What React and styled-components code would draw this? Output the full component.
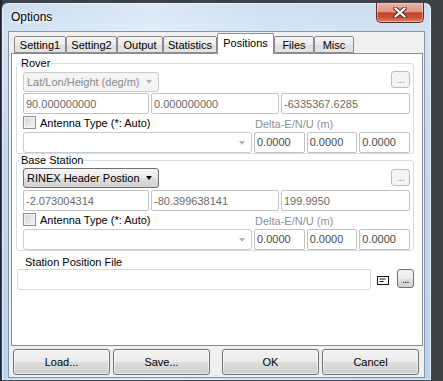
import React from 'react';
import styled, { createGlobalStyle } from 'styled-components';

const GlobalStyle = createGlobalStyle`
  * { box-sizing: border-box; }
  html, body {
    margin: 0;
    padding: 0;
    background: #30353c;
  }
  body {
    font-family: "Liberation Sans", Arial, sans-serif;
    font-size: 11px;
    color: #000;
  }
`;

const tabs = ['Setting1', 'Setting2', 'Output', 'Statistics', 'Positions', 'Files', 'Misc'];
const tabWidths = [52, 51, 46, 54, 57, 40, 40];

const CloseIcon = () => (
    <svg width="14" height="11" viewBox="0 0 14 11">
        <path d="M2.5 1.5 L11.5 9.5 M11.5 1.5 L2.5 9.5" stroke="#4a2a24" strokeWidth="4.2" strokeLinecap="round" fill="none" />
        <path d="M2.5 1.5 L11.5 9.5 M11.5 1.5 L2.5 9.5" stroke="#fff" strokeWidth="2.3" strokeLinecap="round" fill="none" />
    </svg>
);

const NoteIcon = () => (
    <svg width="12" height="9" viewBox="0 0 12 9">
        <rect x="0.5" y="0.5" width="11" height="8" fill="#fff" stroke="#111" />
        <path d="M2.5 3 H8.5 M2.5 5.5 H6.5" stroke="#111" strokeWidth="1" />
    </svg>
);

const PositionGroup = ({ title, mode, enabled, values }) => (
    <Group>
        <Legend>{title}</Legend>
        <TopRow>
            <Combo $width={136} $offset={enabled ? 0 : 1} $enabled={enabled} $disabled={!enabled}>
                <span>{mode}</span>
                <Arrow $dark={enabled} />
            </Combo>
            <DotsButton $offset={enabled ? 1 : 0}>...</DotsButton>
        </TopRow>
        <CoordRow>
            {values.map((v) => (
                <Field key={v} readOnly value={v} />
            ))}
        </CoordRow>
        <AntennaGrid>
            <CheckLabel>
                <CheckBox />
                Antenna Type (*: Auto)
            </CheckLabel>
            <DeltaLabel>Delta-E/N/U (m)</DeltaLabel>
        </AntennaGrid>
        <AntennaGrid>
            <Combo $offset={1}>
                <span />
                <Arrow />
            </Combo>
            <Field readOnly value="0.0000" $dark />
            <Field readOnly value="0.0000" $dark />
            <Field readOnly value="0.0000" $dark />
        </AntennaGrid>
    </Group>
);

const App = () => {
    return (
        <Screen>
            <GlobalStyle />
            <Window>
                <TitleBar>
                    <Title>Options</Title>
                    <CloseButton>
                        <CloseIcon />
                    </CloseButton>
                </TitleBar>
                <Client>
                    <TabStrip>
                        {tabs.map((t, i) => (
                            <Tab key={t} $width={tabWidths[i]} $active={t === 'Positions'}>
                                {t}
                            </Tab>
                        ))}
                    </TabStrip>
                    <Panel>
                        <PositionGroup
                            title="Rover"
                            mode="Lat/Lon/Height (deg/m)"
                            values={['90.000000000', '0.000000000', '-6335367.6285']}
                        />
                        <PositionGroup
                            title="Base Station"
                            mode="RINEX Header Postion"
                            enabled
                            values={['-2.073004314', '-80.399638141', '199.9950']}
                        />
                        <FileLabel>Station Position File</FileLabel>
                        <FileRow>
                            <Field readOnly value="" $light />
                            <IconSlot>
                                <NoteIcon />
                            </IconSlot>
                            <DotsButton $active $height={19}>...</DotsButton>
                        </FileRow>
                    </Panel>
                    <ButtonBar>
                        <ButtonGroup>
                            <Button>Load...</Button>
                            <Button>Save...</Button>
                        </ButtonGroup>
                        <ButtonGroup>
                            <Button>OK</Button>
                            <Button>Cancel</Button>
                        </ButtonGroup>
                    </ButtonBar>
                </Client>
            </Window>
        </Screen>
    );
};

export default App;

const Screen = styled.div`
    width: 443px;
    height: 381px;
    padding: 2px 0 0 1px;
    overflow: hidden;
    background: linear-gradient(90deg, #1c2636 0px, #1c2636 2px, #3d4146 2px);
`;

const Window = styled.div`
    width: 431px;
    height: 379px;
    display: flex;
    flex-direction: column;
    padding: 0 6px 2px 6px;
    border: 1px solid #3b4654;
    border-radius: 7px 7px 0 0;
    background:
        linear-gradient(90deg, rgba(255, 255, 255, 0) 0%, rgba(255, 255, 255, 0.35) 35%, rgba(255, 255, 255, 0.1) 60%, rgba(255, 255, 255, 0) 85%),
        linear-gradient(180deg, #cadcef 0%, #d3e3f3 8%, #c3d8ed 40%, #b9d4ee 100%);
    box-shadow: inset 0 0 0 1px rgba(255, 255, 255, 0.55);
`;

const TitleBar = styled.div`
    height: 28px;
    display: flex;
    justify-content: space-between;
    align-items: flex-start;
    padding: 0 1px 0 3px;
`;

const Title = styled.div`
    margin-top: 7px;
    font-size: 12px;
    line-height: 14px;
    text-shadow: 0 0 6px rgba(255, 255, 255, 0.95), 0 0 3px rgba(255, 255, 255, 0.9);
`;

const CloseButton = styled.div`
    width: 48px;
    height: 20px;
    display: flex;
    align-items: center;
    justify-content: center;
    border: 1px solid #6a2b20;
    border-top: none;
    border-radius: 0 0 5px 5px;
    background: linear-gradient(180deg, #eab3a5 0%, #dd9383 45%, #c2432b 52%, #c94d33 75%, #df8566 100%);
    box-shadow: inset 0 0 0 1px rgba(255, 220, 210, 0.45);
`;

const Client = styled.div`
    flex: 1;
    display: flex;
    flex-direction: column;
    padding: 1px 1px 1px 2px;
    background: #f0f0f0;
    border: 1px solid #8596aa;
`;

const TabStrip = styled.div`
    height: 20px;
    display: flex;
    align-items: flex-end;
    padding-left: 3px;
`;

const Tab = styled.div`
    width: ${(p) => p.$width}px;
    height: ${(p) => (p.$active ? 21 : 17)}px;
    margin-bottom: ${(p) => (p.$active ? -1 : 0)}px;
    position: relative;
    z-index: ${(p) => (p.$active ? 1 : 0)};
    display: flex;
    align-items: center;
    justify-content: center;
    padding-bottom: ${(p) => (p.$active ? 2 : 0)}px;
    border: 1px solid #898c95;
    border-bottom: ${(p) => (p.$active ? 'none' : '1px solid #898c95')};
    border-radius: 2px 2px 0 0;
    background: ${(p) => (p.$active ? '#fff' : 'linear-gradient(180deg, #f4f4f4 0%, #ececec 50%, #dfdfdf 51%, #e4e4e4 100%)')};
    font-size: 11px;
    white-space: nowrap;
`;

const Panel = styled.div`
    flex: 1;
    display: flex;
    flex-direction: column;
    padding: 3px 8px 0 4px;
    background: #fff;
    border: 1px solid #898c95;
`;

const Group = styled.fieldset`
    margin: 0;
    min-width: 0;
    padding: 2px 3px 0 6px;
    border: 1px solid #d5dfe5;
    border-radius: 3px;
    display: flex;
    flex-direction: column;
`;

const Legend = styled.legend`
    margin-left: -3px;
    padding: 0 1px;
    font-size: 11px;
    line-height: 12px;
`;

const TopRow = styled.div`
    height: 21px;
    display: flex;
    justify-content: space-between;
    align-items: flex-start;
`;

const CoordRow = styled.div`
    margin-top: 1px;
    display: grid;
    grid-template-columns: 126px 128px 1fr;
    column-gap: 2px;
`;

const AntennaGrid = styled.div`
    display: grid;
    grid-template-columns: 229px repeat(3, 1fr);
    column-gap: 2px;
    align-items: center;
`;

const Combo = styled.div`
    width: ${(p) => (p.$width ? `${p.$width}px` : 'auto')};
    height: ${(p) => (p.$width ? 20 : 21)}px;
    margin-top: ${(p) => p.$offset || 0}px;
    display: flex;
    align-items: center;
    justify-content: space-between;
    padding: 0 6px 0 3px;
    border: 1px solid ${(p) => (p.$enabled ? '#707070' : '#cacaca')};
    border-radius: 3px;
    background: ${(p) =>
        p.$enabled
            ? 'linear-gradient(180deg, #f4f4f4 0%, #ececec 50%, #dedede 52%, #d2d2d2 100%)'
            : p.$disabled
              ? '#f4f4f4'
              : '#fff'};
    color: ${(p) => (p.$enabled ? '#000' : '#8a8a8a')};
    font-size: 11px;
    white-space: nowrap;
`;

const Arrow = styled.span`
    width: 0;
    height: 0;
    border-left: 3.5px solid transparent;
    border-right: 3.5px solid transparent;
    border-top: 4px solid ${(p) => (p.$dark ? '#000' : '#b4b4b4')};
`;

const DotsButton = styled.div`
    width: 19px;
    height: ${(p) => p.$height || 17}px;
    margin-top: ${(p) => p.$offset || 0}px;
    display: flex;
    align-items: flex-end;
    justify-content: center;
    padding-bottom: 3px;
    border: 1px solid ${(p) => (p.$active ? '#707070' : '#b9bdc1')};
    border-radius: 3px;
    background: ${(p) =>
        p.$active ? 'linear-gradient(180deg, #f4f4f4 0%, #ececec 50%, #dedede 52%, #d2d2d2 100%)' : '#f4f4f4'};
    color: ${(p) => (p.$active ? '#000' : '#8a8a8a')};
    font-size: 10px;
    line-height: 8px;
    letter-spacing: -0.5px;
`;

const Field = styled.input`
    width: 100%;
    min-width: 0;
    height: 21px;
    margin: 0;
    padding: 0 2px;
    border: 1px solid ${(p) => (p.$light ? '#d9d9d9' : '#c2c2c2')};
    border-radius: 2px;
    background: #fff;
    color: ${(p) => (p.$dark ? '#4a4a4a' : '#6a6a6a')};
    font-family: "Liberation Sans", Arial, sans-serif;
    font-size: 11px;
    outline: none;
`;

const CheckLabel = styled.div`
    height: 17px;
    display: flex;
    align-items: center;
    gap: 4px;
    font-size: 11px;
    white-space: nowrap;
`;

const CheckBox = styled.span`
    width: 13px;
    height: 13px;
    border: 1px solid #8e8f8f;
    background: linear-gradient(135deg, #d0d2d4 0%, #e8e9ea 60%, #f6f6f6 100%);
    box-shadow: inset 0 0 0 1px #f4f4f4;
`;

const DeltaLabel = styled.div`
    grid-column: 2 / 5;
    padding: 3px 0 0 1px;
    color: #8a8f99;
    font-size: 11px;
    white-space: nowrap;
`;

const FileLabel = styled.div`
    margin: 5px 0 0 9px;
    font-size: 11px;
    line-height: 13px;
`;

const FileRow = styled.div`
    display: flex;
    align-items: flex-start;
    margin-left: 1px;
`;

const IconSlot = styled.div`
    display: flex;
    margin: 7px 8px 0 6px;
`;

const ButtonBar = styled.div`
    margin: 3px 4px 1px 2px;
    display: flex;
    justify-content: space-between;
`;

const ButtonGroup = styled.div`
    display: flex;
    gap: 3px;
`;

const Button = styled.div`
    width: 97px;
    height: 26px;
    display: flex;
    align-items: center;
    justify-content: center;
    border: 1px solid #707070;
    border-radius: 3px;
    background: linear-gradient(180deg, #f2f2f2 0%, #ebebeb 50%, #dddddd 51%, #cfcfcf 100%);
    box-shadow: inset 0 0 0 1px rgba(255, 255, 255, 0.6);
    font-size: 11px;
`;
